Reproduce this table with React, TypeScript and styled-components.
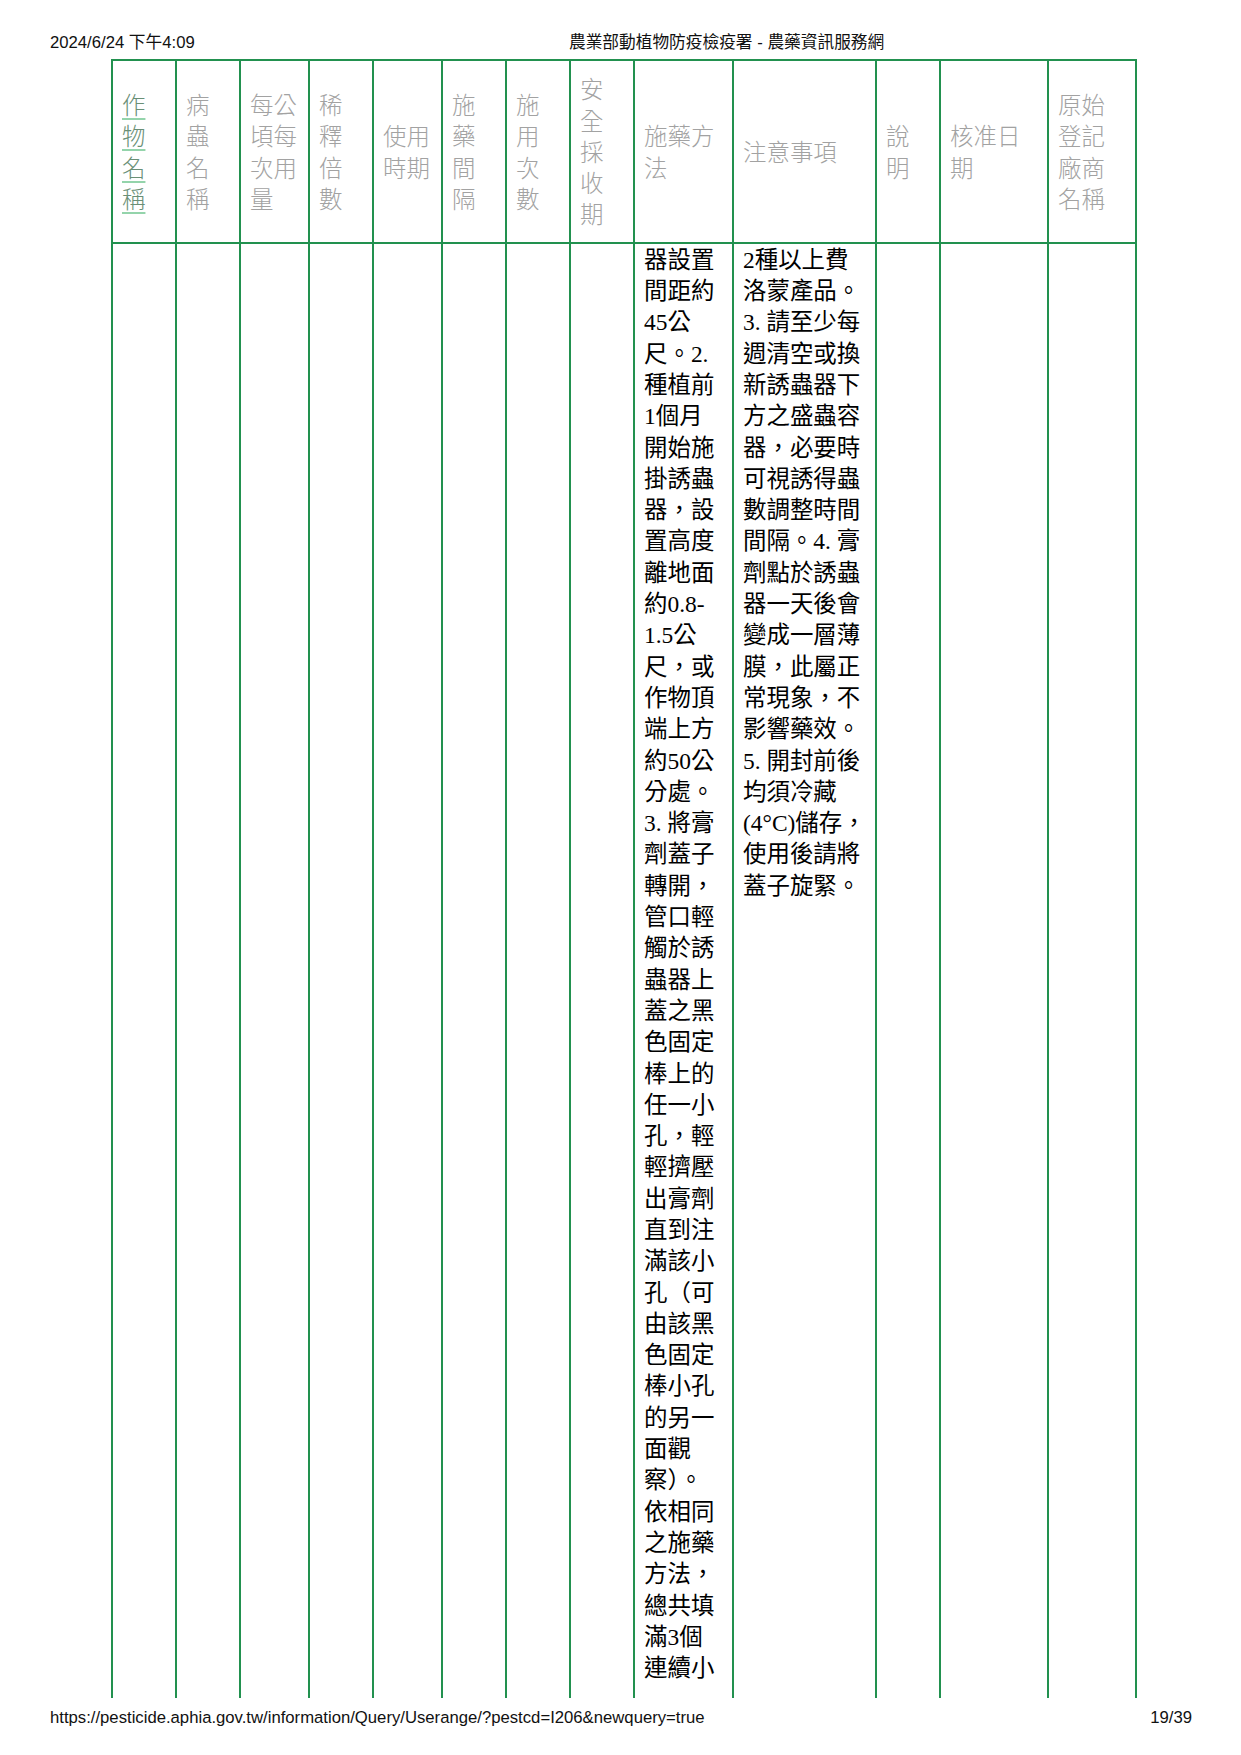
import React from 'react';
import styled, { createGlobalStyle } from 'styled-components';

const GlobalStyle = createGlobalStyle`
  html, body { margin: 0; padding: 0; background: #fff; }
  body { font-family: "Liberation Sans", "Noto Sans CJK TC", sans-serif; color: #000; }
`;

const Page = styled.div`
  width: 1241px;
  height: 1755px;
  box-sizing: border-box;
  padding: 33px 49px 0 50px;
  display: flex;
  flex-direction: column;
  overflow: hidden;
`;

const PrintBar = styled.div`
  display: grid;
  grid-template-columns: 519px 1fr;
  font-family: "Liberation Sans", "Noto Sans CJK TC", sans-serif;
  font-size: 16.7px;
  line-height: 19px;
  color: #111;
  white-space: nowrap;
`;

const PrintFooter = styled.div`
  display: flex;
  justify-content: space-between;
  margin-top: 9.5px;
  font-family: "Liberation Sans", "Noto Sans CJK TC", sans-serif;
  font-size: 16.7px;
  line-height: 19px;
  color: #111;
  white-space: nowrap;
`;

const TableWrap = styled.div`
  margin: 7.3px 0 0 61px;
`;

const Table = styled.table`
  border-collapse: collapse;
  table-layout: fixed;
  width: 1026px;
  font-family: "Liberation Serif", "Noto Sans CJK TC", serif;
  font-size: 23.44px;
  line-height: 31.3px;
`;

const HeadCell = styled.th`
  border: 2px solid #22914f;
  padding: 12px 9px;
  vertical-align: middle;
  text-align: left;
  font-weight: 300;
  font-family: "Noto Sans CJK TC", sans-serif;
  color: #a2a2a2;
`;

const SortLink = styled.a`
  color: #6a8f76;
  text-decoration: underline;
  text-decoration-color: #94d4ab;
  text-decoration-thickness: 2px;
  text-underline-offset: 4px;
`;

const BodyCell = styled.td`
  border: 2px solid #22914f;
  border-bottom: none;
  padding: 1px 9px 14px;
  vertical-align: top;
  text-align: left;
  white-space: nowrap;
  color: #000;
`;

const columns: { label: string; width: number; link?: boolean }[] = [
  { label: '作物名稱', width: 64, link: true },
  { label: '病蟲名稱', width: 64 },
  { label: '每公頃每次用量', width: 69 },
  { label: '稀釋倍數', width: 64 },
  { label: '使用時期', width: 69 },
  { label: '施藥間隔', width: 64 },
  { label: '施用次數', width: 64 },
  { label: '安全採收期', width: 64 },
  { label: '施藥方法', width: 99 },
  { label: '注意事項', width: 143 },
  { label: '說明', width: 64 },
  { label: '核准日期', width: 108 },
  { label: '原始登記廠商名稱', width: 88 },
];

const methodLines = [
  '器設置', '間距約', '45公', '尺。2.', '種植前', '1個月', '開始施', '掛誘蟲',
  '器，設', '置高度', '離地面', '約0.8-', '1.5公', '尺，或', '作物頂', '端上方',
  '約50公', '分處。', '3. 將膏', '劑蓋子', '轉開，', '管口輕', '觸於誘', '蟲器上',
  '蓋之黑', '色固定', '棒上的', '任一小', '孔，輕', '輕擠壓', '出膏劑', '直到注',
  '滿該小', '孔（可', '由該黑', '色固定', '棒小孔', '的另一', '面觀', '察）。',
  '依相同', '之施藥', '方法，', '總共填', '滿3個', '連續小',
];

const noteLines = [
  '2種以上費', '洛蒙產品。', '3. 請至少每', '週清空或換', '新誘蟲器下', '方之盛蟲容',
  '器，必要時', '可視誘得蟲', '數調整時間', '間隔。4. 膏', '劑點於誘蟲', '器一天後會',
  '變成一層薄', '膜，此屬正', '常現象，不', '影響藥效。', '5. 開封前後', '均須冷藏',
  '(4°C)儲存，', '使用後請將', '蓋子旋緊。',
];

const Lines: React.FC<{ lines: string[] }> = ({ lines }) => (
  <>
    {lines.map((l, i) => (
      <React.Fragment key={i}>
        {l}
        {i < lines.length - 1 && <br />}
      </React.Fragment>
    ))}
  </>
);

const bodyContent: Record<number, string[]> = {
  8: methodLines,
  9: noteLines,
};

export default function App() {
  return (
    <>
      <GlobalStyle />
      <Page lang="zh-TW">
        <PrintBar>
          <span>2024/6/24 下午4:09</span>
          <span>農業部動植物防疫檢疫署 - 農藥資訊服務網</span>
        </PrintBar>
        <TableWrap>
          <Table>
            <colgroup>
              {columns.map((c) => (
                <col key={c.label} style={{ width: c.width }} />
              ))}
            </colgroup>
            <thead>
              <tr>
                {columns.map((c) => (
                  <HeadCell key={c.label}>
                    {c.link ? <SortLink href="#">{c.label}</SortLink> : c.label}
                  </HeadCell>
                ))}
              </tr>
            </thead>
            <tbody>
              <tr>
                {columns.map((c, i) => (
                  <BodyCell key={c.label}>
                    {bodyContent[i] ? <Lines lines={bodyContent[i]} /> : null}
                  </BodyCell>
                ))}
              </tr>
            </tbody>
          </Table>
        </TableWrap>
        <PrintFooter>
          <span>https://pesticide.aphia.gov.tw/information/Query/Userange/?pestcd=I206&amp;newquery=true</span>
          <span>19/39</span>
        </PrintFooter>
      </Page>
    </>
  );
}
